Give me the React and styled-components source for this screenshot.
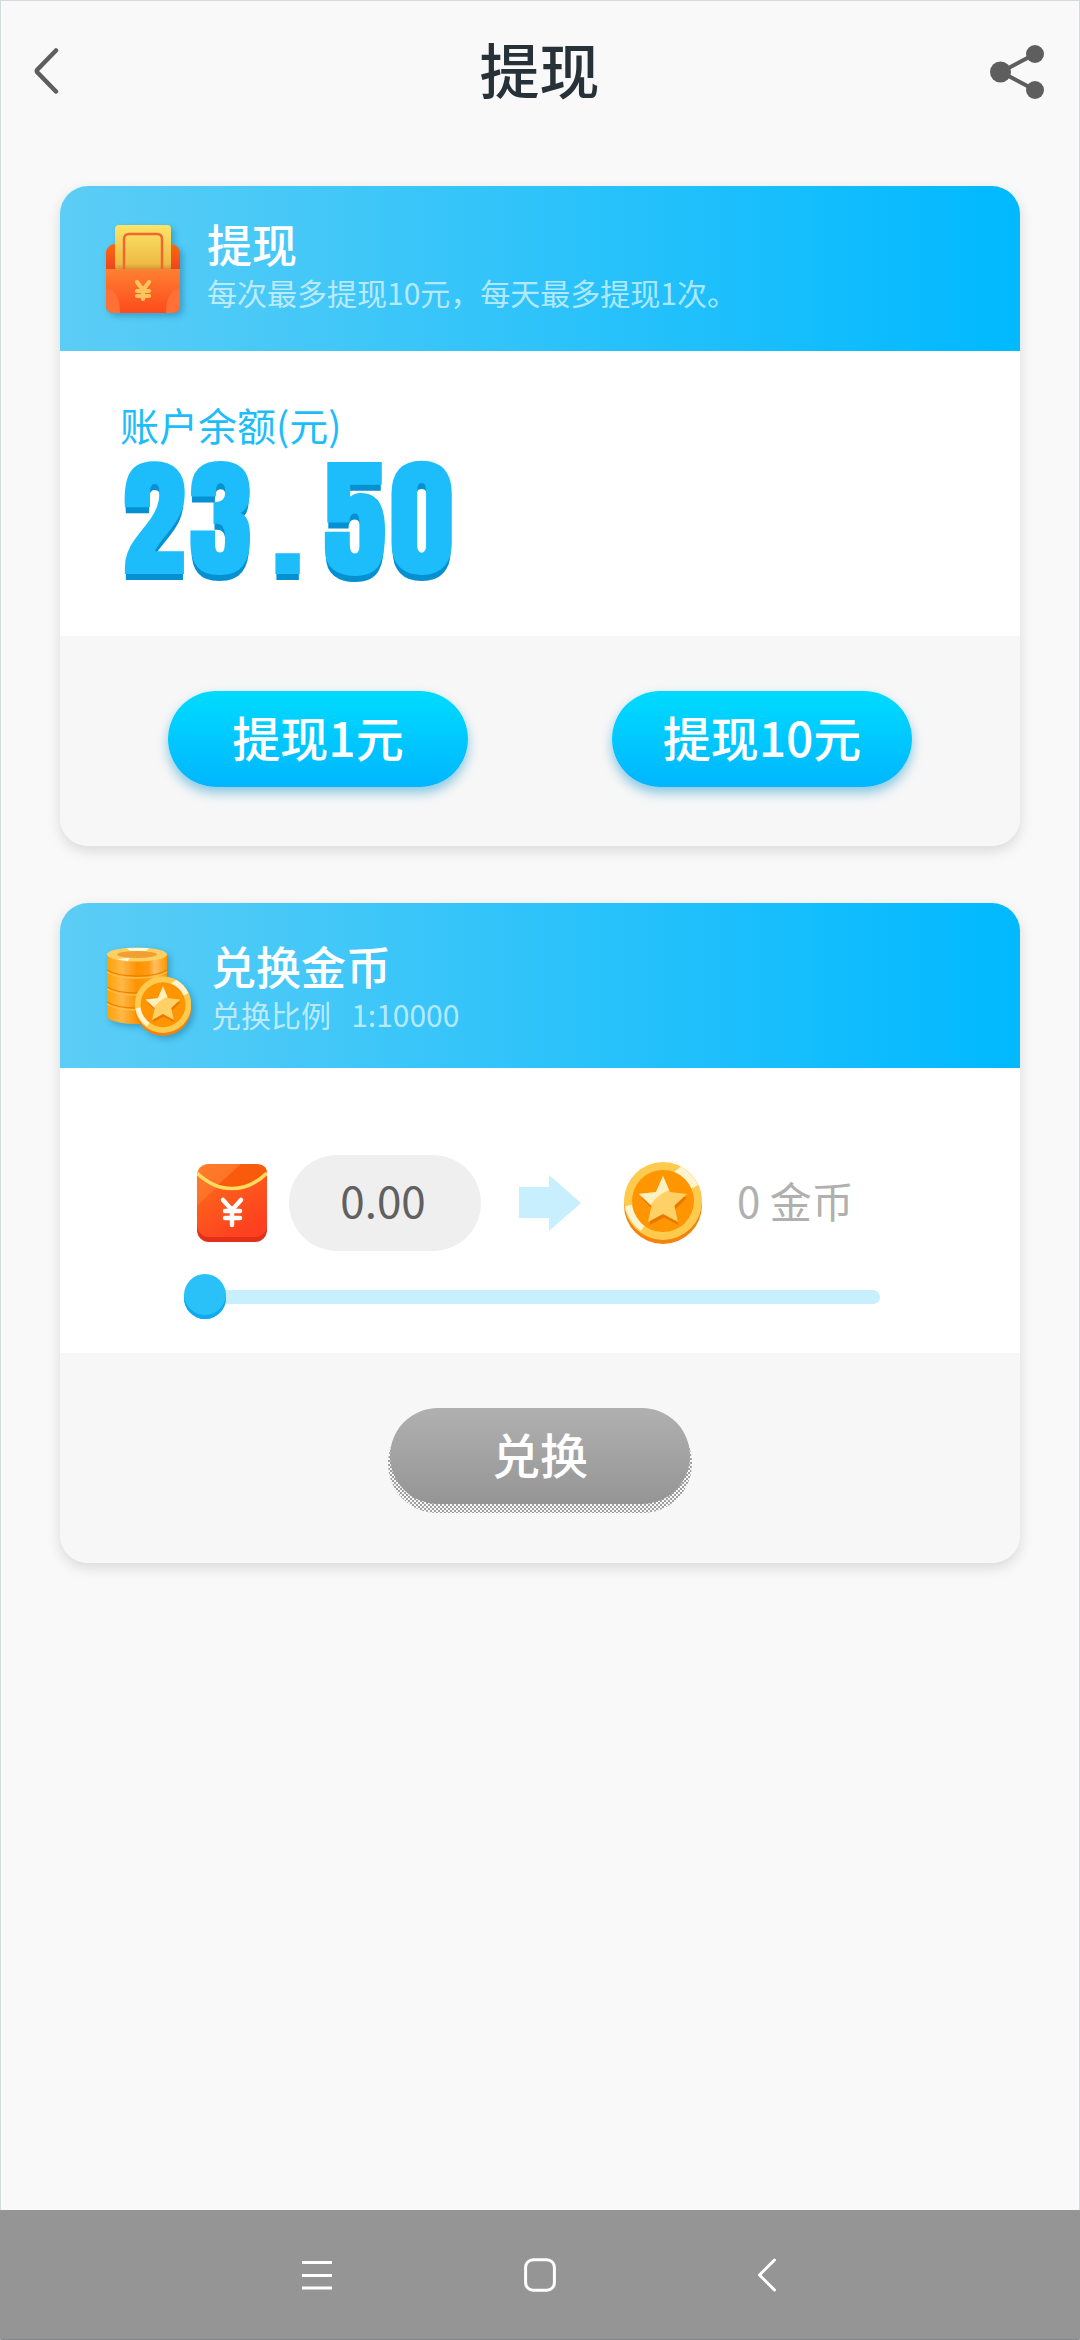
import React, { useState } from "react";
import styled, { createGlobalStyle } from "styled-components";

const RATE = 10000;

const App = () => {
  const [amount, setAmount] = useState(0);

  return (
    <>
      <GlobalStyle />
      <Page>
        <TopBar>
          <IconButton type="button" aria-label="返回">
            <svg width="26" height="50" viewBox="0 0 26 50" fill="none">
              <path d="M22 3.500L3.500 22.500Q2.200 24 3.500 25.500L22 44.500" stroke="#5e5e5e" strokeWidth="4.500" strokeLinecap="round" />
            </svg>
          </IconButton>
          <PageTitle>提现</PageTitle>
          <IconButton type="button" aria-label="分享">
            <ShareIcon />
          </IconButton>
        </TopBar>

        <Main>
          <Card>
            <WithdrawHeader>
              <WalletIcon />
              <div>
                <CardTitle>提现</CardTitle>
                <CardDesc>每次最多提现10元，每天最多提现1次。</CardDesc>
              </div>
            </WithdrawHeader>
            <BalanceBody>
              <BalanceLabel>账户余额(元)</BalanceLabel>
              <Balance>
                {"23.50".split("").map((ch, i) => (
                  <Digit key={i}>{ch}</Digit>
                ))}
              </Balance>
            </BalanceBody>
            <CardFooter>
              <PillButton type="button">提现1元</PillButton>
              <PillButton type="button">提现10元</PillButton>
            </CardFooter>
          </Card>

          <Card>
            <ExchangeHeader>
              <CoinsIcon />
              <div>
                <CardTitle>兑换金币</CardTitle>
                <CardDesc>{"兑换比例   1:10000"}</CardDesc>
              </div>
            </ExchangeHeader>
            <ExchangeBody>
              <ExchangeRow>
                <EnvelopeIcon />
                <Amount>{amount.toFixed(2)}</Amount>
                <ArrowIcon />
                <CoinIcon />
                <Coins>{Math.round(amount * RATE)} 金币</Coins>
              </ExchangeRow>
              <Slider
                type="range"
                aria-label="兑换金额"
                min="0"
                max="23.5"
                step="0.01"
                value={amount}
                onChange={(e) => setAmount(Number(e.target.value))}
              />
            </ExchangeBody>
            <CardFooter>
              <ExchangeButton type="button" disabled={amount === 0}>兑换</ExchangeButton>
            </CardFooter>
          </Card>
        </Main>

        <NavBar>
          <IconButton type="button" aria-label="菜单">
            <svg width="32" height="34" viewBox="0 0 32 34" stroke="#fff" strokeWidth="2.800">
              <path d="M2 4.500H32M2 17.500H32M2 30H32" />
            </svg>
          </IconButton>
          <IconButton type="button" aria-label="主页">
            <svg width="32" height="34" viewBox="0 0 32 34" fill="none">
              <rect x="1.600" y="1.800" width="28.800" height="30.400" rx="7.500" stroke="#fff" strokeWidth="3" />
            </svg>
          </IconButton>
          <IconButton type="button" aria-label="后退">
            <svg width="32" height="34" viewBox="0 0 32 34" fill="none">
              <path d="M26.500 2L11.500 17L26.500 32" stroke="#fff" strokeWidth="3" strokeLinecap="round" strokeLinejoin="round" />
            </svg>
          </IconButton>
        </NavBar>
      </Page>
    </>
  );
};
export default App;

const ShareIcon = () => (
  <svg width="56" height="56" viewBox="0 0 56 56" fill="#5e5e5e">
    <path d="M46 10L12 28L46 46" fill="none" stroke="#5e5e5e" strokeWidth="4" />
    <circle cx="11.500" cy="28" r="10.500" />
    <circle cx="46" cy="10" r="9" />
    <circle cx="46" cy="46" r="9" />
  </svg>
);

const WalletIcon = () => (
  <Picture width="82" height="96" viewBox="0 -6 82 96">
    <defs>
      <linearGradient id="walletFront" x1="0" y1="0" x2="0" y2="1">
        <stop offset="0" stopColor="#fe8130" />
        <stop offset="1" stopColor="#fe4a1c" />
      </linearGradient>
      <linearGradient id="walletBack" x1="0" y1="0" x2="0" y2="1">
        <stop offset="0" stopColor="#fa6b0b" />
        <stop offset="0.600" stopColor="#ee3b22" />
      </linearGradient>
      <linearGradient id="walletCard" x1="0" y1="0" x2="0" y2="1">
        <stop offset="0" stopColor="#fde46a" />
        <stop offset="0.850" stopColor="#eebb43" />
        <stop offset="1" stopColor="#c4853a" />
      </linearGradient>
    </defs>
    <rect x="1" y="20" width="74" height="50" rx="9" fill="url(#walletBack)" />
    <rect x="10" y="1" width="56" height="46" rx="4" fill="url(#walletCard)" />
    <path d="M19 46V15Q19 10 24 10H52Q57 10 57 15V46" fill="none" stroke="#f4642c" strokeWidth="2.400" />
    <path d="M1 45H75V81Q75 89 67 89H9Q1 89 1 81Z" fill="url(#walletFront)" />
    <path d="M1 64Q15 66 15 89H9Q1 89 1 81ZM75 64Q61 66 61 89H67Q75 89 75 81Z" fill="#ff7036" />
    <path d="M32 58L38 66L44 58M32 67H44M32 72H44M38 66V75" fill="none" stroke="#ffc45c" strokeWidth="4.200" strokeLinecap="round" />
  </Picture>
);

const CoinFace = () => (
  <>
    <circle cx="40" cy="43" r="39" fill="#f58209" />
    <circle cx="40" cy="39" r="39" fill="#fecb4e" />
    <path d="M58 4.500A39 39 0 0 1 75 23L66 28A31 31 0 0 0 51 10Z" fill="#fff4cf" />
    <path d="M2 44A39 39 0 0 0 18 69L22 63A31 31 0 0 1 9 43Z" fill="#fff4cf" />
    <circle cx="40" cy="39" r="31" fill="#ff9500" />
    <path d="M41 19L48 33.500L64 35.500L52.500 47L55.500 63L41 55.500L26.500 63L29.500 47L18 35.500L34 33.500Z" fill="#e97800" />
    <path d="M40 14L47 30L64 32L51.500 43.500L55 60L40 52L25 60L28.500 43.500L16 32L33 30Z" fill="#fed065" />
    <path d="M40 14L46 28Q34 33 27.500 43L16 32L33 30Z" fill="#fff0bf" />
  </>
);

const CoinIcon = () => (
  <svg width="80" height="83" viewBox="0 0 80 83">
    <CoinFace />
  </svg>
);

const CoinsIcon = () => (
  <Picture width="86" height="98" viewBox="-1 -8 86 98">
    <defs>
      <linearGradient id="coinSide">
        <stop offset="0" stopColor="#ffa000" />
        <stop offset="0.250" stopColor="#ffb84a" />
        <stop offset="0.500" stopColor="#ff9200" />
        <stop offset="0.700" stopColor="#ff9c14" />
        <stop offset="0.800" stopColor="#ffc062" />
        <stop offset="1" stopColor="#ff9500" />
      </linearGradient>
    </defs>
    <path d="M1 7V71Q10 77 31 77T61 71V7Z" fill="url(#coinSide)" />
    <path d="M1 23Q10 29 31 29T61 23M1 40Q10 46 31 46T61 40M1 55Q10 61 31 61T61 55" fill="none" stroke="#ee8200" strokeWidth="1.500" />
    <path d="M1 25Q10 31 31 31T61 25M1 42Q10 48 31 48T61 42M1 57Q10 63 31 63T61 57" fill="none" stroke="#ffc04a" strokeWidth="1.500" />
    <ellipse cx="31" cy="7.500" rx="30" ry="7" fill="#fed063" />
    <path d="M21 1L43 1L40 4H24ZM11 12.500L24 10.500L22 14.300Z" fill="#fff8dc" />
    <ellipse cx="31" cy="7.500" rx="20" ry="3.500" fill="#f0a030" />
    <svg x="28" y="29" width="58" height="61" viewBox="0 0 80 83">
      <CoinFace />
    </svg>
  </Picture>
);

const EnvelopeIcon = () => (
  <svg width="70" height="78" viewBox="0 0 70 78">
    <defs>
      <linearGradient id="envelope" x1="0" y1="0" x2="0.600" y2="1">
        <stop offset="0" stopColor="#ff7a24" />
        <stop offset="0.400" stopColor="#fd5e1c" />
        <stop offset="1" stopColor="#fe4020" />
      </linearGradient>
    </defs>
    <rect y="2" width="70" height="76" rx="12" fill="#e2301a" />
    <rect width="70" height="73" rx="12" fill="url(#envelope)" />
    <path d="M12 0H44L0 42V12Q0 0 12 0Z" fill="#ff8232" opacity="0.550" />
    <path d="M44 0H58Q70 0 70 9Q55 24 35 24Q26 24 20 22Z" fill="#fa5a0c" />
    <path d="M0 9Q16 24.500 35 24.500T70 9" fill="none" stroke="#ffdc5e" strokeWidth="3.600" />
    <path d="M26 36L35 46L44 36M28 47H43M28 54H43M35 46V61" fill="none" stroke="#fff" strokeWidth="4.500" strokeLinecap="round" />
  </svg>
);

const ArrowIcon = () => (
  <svg width="62" height="56" viewBox="0 0 62 56" fill="#c8effe">
    <path d="M0 12H30V0L62 28L30 56V43H0Z" />
  </svg>
);

const GlobalStyle = createGlobalStyle`
  * {
    box-sizing: border-box;
  }
  body {
    margin: 0;
    background: #f9f9f9;
    font-family: "Noto Sans CJK SC", "Noto Sans", sans-serif;
  }
  button {
    font-family: inherit;
  }
`;

const Page = styled.div`
  display: flex;
  flex-direction: column;
  min-height: 100vh;
  border: 1px solid #d3dcdc;
  border-bottom-color: #7f8a89;
`;

const TopBar = styled.header`
  display: grid;
  grid-template-columns: 1fr auto 1fr;
  align-items: center;
  height: 142px;
  padding: 0 34px 0 33px;
  & > :last-child {
    justify-self: end;
  }
`;

const PageTitle = styled.h1`
  margin: 0;
  padding-bottom: 8px;
  font-size: 60px;
  line-height: 80px;
  font-weight: 500;
  color: #263238;
`;

const IconButton = styled.button`
  display: flex;
  padding: 0;
  border: none;
  background: none;
`;

const Main = styled.main`
  display: flex;
  flex-direction: column;
  gap: 57px;
  padding: 43px 59px;
`;

const Card = styled.section`
  overflow: hidden;
  border-radius: 28px;
  background: white;
  box-shadow: 0 5px 14px rgba(0, 0, 0, 0.13);
`;

const CardHeader = styled.div`
  display: flex;
  align-items: center;
  gap: 20px;
  height: 165px;
  padding: 0 45px;
  background: linear-gradient(90deg, #5ccdf5, #00b9ff);
`;

const WithdrawHeader = styled(CardHeader)`
  padding-bottom: 6px;
`;

const ExchangeHeader = styled(CardHeader)`
  padding-top: 4px;
`;

const CardTitle = styled.h2`
  margin: 0;
  font-size: 45px;
  line-height: 52px;
  font-weight: 500;
  color: white;
`;

const CardDesc = styled.p`
  margin: 0;
  font-size: 30px;
  line-height: 44px;
  white-space: pre;
  color: rgba(255, 255, 255, 0.65);
`;

const Picture = styled.svg`
  filter: drop-shadow(3px 3px 3px rgba(0, 60, 100, 0.3));
`;

const BalanceBody = styled.div`
  height: 285px;
  padding: 45px 60px 0;
  color: #1dbdfb;
`;

const BalanceLabel = styled.div`
  font-size: 39px;
  line-height: 56px;
`;

const Balance = styled.div`
  display: flex;
  font-family: Impact, Anton, "Roboto Condensed", sans-serif;
  font-size: 128px;
  line-height: 134px;
  font-weight: normal;
  -webkit-text-stroke: 2px #1dbdfb;
  text-shadow: 0 7px 0 #0590d2;
`;

const Digit = styled.span`
  width: 67px;
  text-align: center;
`;

const CardFooter = styled.div`
  display: flex;
  justify-content: center;
  gap: 144px;
  height: 210px;
  padding-top: 55px;
  background: #f7f7f7;
  isolation: isolate;
`;

const PillButton = styled.button`
  position: relative;
  width: 300px;
  height: 96px;
  padding: 0 0 6px;
  border: none;
  border-radius: 48px;
  font-size: 48px;
  line-height: 72px;
  font-weight: 500;
  color: white;
  background: linear-gradient(#00dbff, #00b6ff);
  box-shadow: 0 6px 12px rgba(0, 140, 200, 0.45);
`;

const ExchangeButton = styled(PillButton)`
  &:disabled {
    background: linear-gradient(#b0b0b0, #959595);
    box-shadow: none;
  }
  /* dotted shadow under the disabled button */
  &:disabled::before {
    content: "";
    position: absolute;
    z-index: -1;
    inset: 6px -2px -9px;
    border-radius: 54px;
    background: repeating-conic-gradient(#a0a0a0 0 25%, transparent 0 50%) 0 0 / 4px 4px;
  }
`;

const ExchangeBody = styled.div`
  height: 285px;
  padding: 87px 140px 0 124px;
`;

const ExchangeRow = styled.div`
  display: flex;
  align-items: center;
  padding-left: 13px;
  svg {
    flex-shrink: 0;
  }
`;

const Amount = styled.output`
  width: 192px;
  margin: 0 38px 0 22px;
  padding: 0 4px 8px 0;
  border-radius: 48px;
  font-size: 44px;
  line-height: 88px;
  text-align: center;
  color: #606060;
  background: #efefef;
  & + svg {
    margin-right: 42px;
  }
`;

const Coins = styled.span`
  margin-left: 34px;
  padding-bottom: 8px;
  font-size: 42px;
  white-space: nowrap;
  color: #b0b0b0;
`;

const Slider = styled.input`
  appearance: none;
  display: block;
  width: 100%;
  height: 46px;
  margin: 23px 0 0;
  background: none;
  &::-webkit-slider-runnable-track {
    height: 14px;
    border-radius: 7px;
    background: #c8effe;
  }
  &::-webkit-slider-thumb {
    appearance: none;
    width: 42px;
    height: 45px;
    margin-top: -16px;
    border-radius: 21px;
    background: #29c1f8;
    box-shadow: inset 0 -4px 0 #0fa8f5;
  }
`;

const NavBar = styled.nav`
  display: flex;
  justify-content: center;
  align-items: center;
  gap: 192px;
  height: 129px;
  margin: auto -1px 0;
  background: #959595;
`;
